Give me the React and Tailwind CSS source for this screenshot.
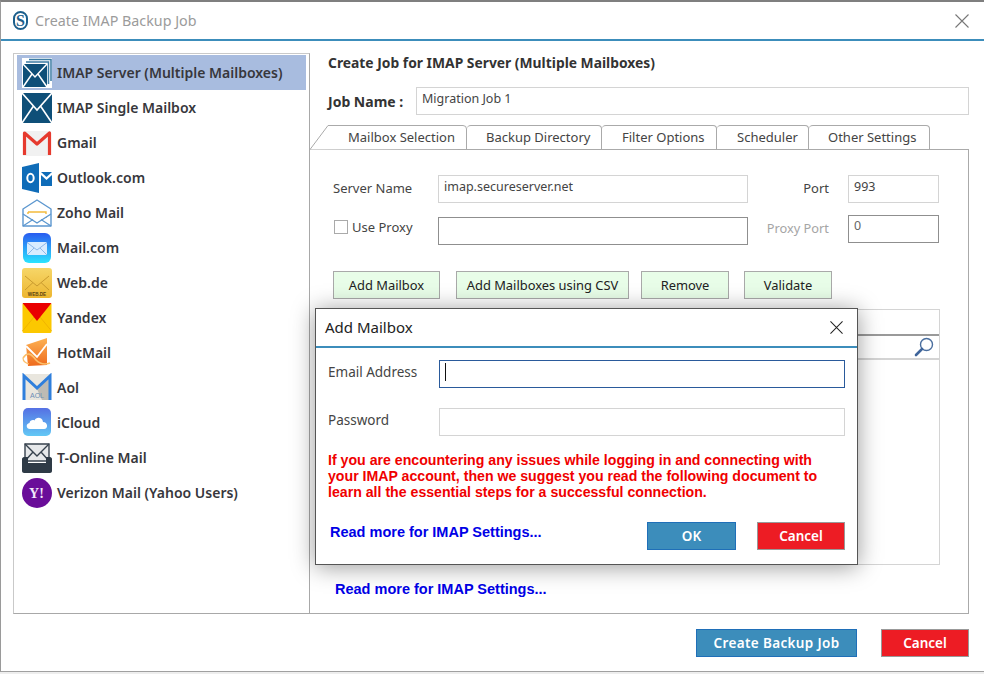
import React from 'react';

const ImapIcon = () => (
  <svg viewBox="0 0 30 30" className="w-[30px] h-[30px]">
    <rect width="30" height="30" fill="#0e4f78" />
    <path d="M0 0 L15 17 L30 0 M0 30 L11.5 13 M30 30 L18.5 13" stroke="#fff" strokeWidth="1.6" fill="none" />
  </svg>
);

const ImapMultiIcon = () => (
  <svg viewBox="0 0 30 30" className="w-[30px] h-[30px]">
    <rect width="30" height="30" fill="#fff" />
    <path d="M7 1.5 H29 V23" stroke="#3b7ba3" strokeWidth="1.5" fill="none" />
    <path d="M4 4 H26.5 V26" stroke="#3b7ba3" strokeWidth="1.5" fill="none" />
    <rect x="1" y="6" width="24" height="23" fill="#0e4f78" />
    <path d="M1 6 L13 19 L25 6 M1 29 L10 16 M25 29 L16 16" stroke="#fff" strokeWidth="1.5" fill="none" />
  </svg>
);

const GmailIcon = () => (
  <svg viewBox="0 0 30 30" className="w-[30px] h-[30px]">
    <rect x="1" y="3" width="28" height="25" fill="#f1f1f1" />
    <path d="M2.5 27 V5 L15 16 L27.5 5 V27" stroke="#e63a2e" strokeWidth="3.2" fill="none" strokeLinejoin="round" />
  </svg>
);

const OutlookIcon = () => (
  <svg viewBox="0 0 30 30" className="w-[30px] h-[30px]">
    <path d="M0 4 L17 0 V30 L0 26 Z" fill="#0f6cb8" />
    <ellipse cx="8.5" cy="15" rx="3.2" ry="4.2" fill="none" stroke="#fff" strokeWidth="2" />
    <path d="M19 9 H30 L24.5 14 Z" fill="#0f6cb8" />
    <path d="M19 12 L24.5 17 L30 12 V23 H19 Z" fill="#0f6cb8" />
  </svg>
);

const ZohoIcon = () => (
  <svg viewBox="0 0 30 30" className="w-[30px] h-[30px]">
    <path d="M1 11 L15 2 L29 11 V28 H1 Z" fill="#fff" stroke="#5c97cf" strokeWidth="1.4" strokeLinejoin="round" />
    <path d="M6 14 H24 V20 M6 14 V20" stroke="#f3bb3c" strokeWidth="1.4" fill="none" />
    <path d="M1 16 L15 25 L29 16" stroke="#5c97cf" strokeWidth="1.4" fill="#fff" />
    <path d="M1 28 L11 21.5 M29 28 L19 21.5" stroke="#5c97cf" strokeWidth="1.2" />
  </svg>
);

const MailComIcon = () => (
  <svg viewBox="0 0 30 30" className="w-[30px] h-[30px]">
    <defs>
      <linearGradient id="mc" x1="0" y1="0" x2="0" y2="1">
        <stop offset="0" stopColor="#2a5cf0" />
        <stop offset="1" stopColor="#2be4ff" />
      </linearGradient>
    </defs>
    <rect x="1" y="0" width="28" height="30" rx="6" fill="url(#mc)" />
    <rect x="5" y="9" width="20" height="13" rx="1.5" fill="#d8ecff" />
    <path d="M5 9.5 L15 17 L25 9.5 M5 22 L12 15 M25 22 L18 15" stroke="#8db8e8" strokeWidth="1" fill="none" />
  </svg>
);

const WebDeIcon = () => (
  <svg viewBox="0 0 30 30" className="w-[30px] h-[30px]">
    <defs>
      <linearGradient id="wd" x1="0" y1="0" x2="0" y2="1">
        <stop offset="0" stopColor="#f6d668" />
        <stop offset="1" stopColor="#edb630" />
      </linearGradient>
    </defs>
    <rect width="30" height="30" rx="3" fill="url(#wd)" />
    <path d="M3 8 L15 18 L27 8 M3 22 L11 14.5 M27 22 L19 14.5" stroke="#c99a2e" strokeWidth="1" fill="none" />
    <text x="15" y="27.5" textAnchor="middle" fontSize="4.6" fontWeight="700" fill="#5a4210" fontFamily="Liberation Sans, sans-serif">WEB.DE</text>
  </svg>
);

const YandexIcon = () => (
  <svg viewBox="0 0 30 30" className="w-[30px] h-[30px]">
    <rect x="0.5" width="29" height="30" rx="1.5" fill="#fcc800" />
    <path d="M0.5 28 L12 14 M29.5 28 L18 14" stroke="#f0b400" strokeWidth="1" />
    <path d="M0.5 0 H29.5 L15 18 Z" fill="#e90000" />
  </svg>
);

const HotmailIcon = () => (
  <svg viewBox="0 0 30 30" className="w-[30px] h-[30px]">
    <defs>
      <linearGradient id="hm" x1="0" y1="0" x2="0" y2="1">
        <stop offset="0" stopColor="#fdb254" />
        <stop offset="1" stopColor="#ee6a1c" />
      </linearGradient>
    </defs>
    <path d="M4 7 L25 0 V27 L6 28 Z" fill="url(#hm)" />
    <path d="M4 8 L15 19 L25 6" stroke="#fff" strokeWidth="1.8" fill="none" />
    <path d="M1 20 C5 14 9 15 14 22 C18 26 23 27 28 25" stroke="#fbbf6a" strokeWidth="1.6" fill="none" />
    <path d="M1 20 C1 24 4 25 7 26" stroke="#fbbf6a" strokeWidth="1.2" fill="none" />
  </svg>
);

const AolIcon = () => (
  <svg viewBox="0 0 30 30" className="w-[30px] h-[30px]">
    <path d="M2 1 H28 V27 H2 Z" fill="#e9e6de" />
    <path d="M15 16 L28 4 V27 H20 Z" fill="#bdbbb4" />
    <path d="M2 27 V3 L15 15 L28 3 V27" stroke="#2f7fdc" strokeWidth="3" fill="none" />
    <text x="15" y="25" textAnchor="middle" fontSize="7" fill="#6b8db5" fontFamily="Liberation Sans, sans-serif">AOL</text>
  </svg>
);

const ICloudIcon = () => (
  <svg viewBox="0 0 30 30" className="w-[30px] h-[30px]">
    <defs>
      <linearGradient id="ic" x1="0" y1="0" x2="0" y2="1">
        <stop offset="0" stopColor="#5570e4" />
        <stop offset="1" stopColor="#62c8f5" />
      </linearGradient>
    </defs>
    <rect x="1" width="28" height="28" rx="5" fill="url(#ic)" />
    <path d="M8 21 C4 21 3.5 15.5 7.5 15 C8 12 11 11.5 12.5 12.5 C14 8.5 20.5 9 21 14 C26 14 26.5 21 22 21 Z" fill="#fff" />
  </svg>
);

const TOnlineIcon = () => (
  <svg viewBox="0 0 30 30" className="w-[30px] h-[30px]">
    <path d="M3 1 H27 V18 H3 Z" fill="#e6e8ea" stroke="#37424e" strokeWidth="1.4" />
    <path d="M3 1 L15 13 L27 1 M3 18 L11 9 M27 18 L19 9" stroke="#37424e" strokeWidth="1.4" fill="none" />
    <path d="M0 16 C0 15 1 14 2 14 H6 V20 H24 V14 H28 C29 14 30 15 30 16 V28 C30 29 29 30 28 30 H2 C1 30 0 29 0 28 Z" fill="#2e3a46" />
  </svg>
);

const YahooIcon = () => (
  <svg viewBox="0 0 30 30" className="w-[30px] h-[30px]">
    <circle cx="15" cy="15" r="15" fill="#6a0d99" />
    <text x="14.5" y="20" textAnchor="middle" fontSize="14" fontWeight="700" fill="#f3e7fa" fontFamily="Liberation Serif, serif">Y!</text>
  </svg>
);

const mailTypes = [
  { name: 'IMAP Server (Multiple Mailboxes)', icon: <ImapMultiIcon />, active: true },
  { name: 'IMAP Single Mailbox', icon: <ImapIcon /> },
  { name: 'Gmail', icon: <GmailIcon /> },
  { name: 'Outlook.com', icon: <OutlookIcon /> },
  { name: 'Zoho Mail', icon: <ZohoIcon /> },
  { name: 'Mail.com', icon: <MailComIcon /> },
  { name: 'Web.de', icon: <WebDeIcon /> },
  { name: 'Yandex', icon: <YandexIcon /> },
  { name: 'HotMail', icon: <HotmailIcon /> },
  { name: 'Aol', icon: <AolIcon /> },
  { name: 'iCloud', icon: <ICloudIcon /> },
  { name: 'T-Online Mail', icon: <TOnlineIcon /> },
  { name: 'Verizon Mail (Yahoo Users)', icon: <YahooIcon /> },
];

const tabs = [
  { name: 'Backup Directory', w: 'w-[135px] pl-[19px]' },
  { name: 'Filter Options', w: 'w-[115px] pl-[20px]' },
  { name: 'Scheduler', w: 'w-[92px] pl-[20px]' },
  { name: 'Other Settings', w: 'w-[121px] pl-[19px]' },
];

const CloseX = ({ className }) => (
  <svg viewBox="0 0 14 14" className={className}>
    <path d="M0.5 0.5 L13.5 13.5 M13.5 0.5 L0.5 13.5" stroke="currentColor" strokeWidth="1.1" />
  </svg>
);

const GreenButton = ({ w, children }) => (
  <button className={`${w} h-[28px] pt-[1px] bg-[#e8fde8] border border-[#a9a9a9] text-[12.9px] text-[#222]`}>{children}</button>
);

const App = () => {
  return (
    <div className="relative w-[984px] h-[674px] overflow-hidden bg-[#eeeeee] font-['Noto_Sans','Liberation_Sans',sans-serif] text-[#333]">
      <div className="h-[672px] bg-white border-t-2 border-l border-b border-t-[#7f7f7f] border-l-[#9a9a9a] border-b-[#a0a0a0] flex flex-col">
        {/* title bar */}
        <div className="h-[37px] shrink-0 flex items-center pl-[12px] pr-[15px]">
          <div className="w-[15px] h-[19px] rounded-full bg-white border-2 border-[#1b5f8c] flex items-center justify-center">
            <span className="font-['Liberation_Serif',serif] font-bold text-[16px] leading-none text-[#1b5f8c]">S</span>
          </div>
          <span className="ml-[7px] text-[14.3px] text-[#9b9b9b]">Create IMAP Backup Job</span>
          <CloseX className="ml-auto w-[14px] h-[14px] text-[#777]" />
        </div>
        <div className="h-[2px] shrink-0 bg-[#3c8dbb]" />

        <div className="flex pl-[12px] pt-[12px]">
          {/* mail type list */}
          <div className="w-[297px] h-[561px] shrink-0 border border-[#c9c9c9] border-r-[#a8a8a8] border-b-[#a8a8a8] pl-[3px] pr-[3px] pt-[1px]">
            {mailTypes.map((m) => (
              <div key={m.name} className={`h-[35px] flex items-center pl-[5px] ${m.active ? 'bg-[#a8bcdf]' : ''}`}>
                {m.icon}
                <span className="ml-[5px] text-[14px] font-semibold text-[#37373c] whitespace-nowrap">{m.name}</span>
              </div>
            ))}
          </div>

          {/* right side */}
          <div className="w-[659px] shrink-0 flex flex-col">
            <div className="pl-[18px] h-[20px] flex items-center text-[13.85px] font-bold text-[#333]">Create Job for IMAP Server (Multiple Mailboxes)</div>
            <div className="pl-[18px] mt-[14px] flex items-center">
              <span className="w-[88px] text-[14px] font-bold text-[#333]">Job Name :</span>
              <div className="w-[553px] h-[28px] border border-[#d4d4d4] pl-[5px] pt-[2px] text-[12.5px] text-[#444]">Migration Job 1</div>
            </div>

            {/* tabs */}
            <div className="mt-[10px] flex h-[25px] relative z-10 -mb-px">
              <div className="relative w-[157px] h-[25px] pl-[38px] pt-[3px] text-[13px] text-[#444]">
                <svg viewBox="0 0 157 25" className="absolute inset-0 w-[157px] h-[25px]">
                  <path d="M0 24.5 L18 0.5 H153 Q156.5 0.5 156.5 4 V24" fill="#fff" stroke="#aaaaaa" />
                </svg>
                <span className="relative">Mailbox Selection</span>
              </div>
              {tabs.map((t) => (
                <div key={t.name} className={`${t.w} h-[25px] border-t border-r border-b border-[#aaaaaa] rounded-t-[4px] pt-[2px] text-[13px] text-[#444] whitespace-nowrap`}>
                  {t.name}
                </div>
              ))}
            </div>

            {/* tab panel */}
            <div className="h-[465px] border-t border-r border-b border-[#aaaaaa] pl-[23px] pt-[25px]">
              <div className="flex items-center h-[28px]">
                <span className="w-[105px] text-[13px] text-[#444]">Server Name</span>
                <div className="w-[310px] h-[28px] border border-[#d4d4d4] pl-[5px] pt-[2px] text-[12.5px] text-[#444]">imap.secureserver.net</div>
                <span className="w-[81px] text-right text-[13px] text-[#444]">Port</span>
                <div className="ml-[19px] w-[91px] h-[28px] border border-[#d4d4d4] pl-[5px] pt-[2px] text-[12.5px] text-[#444]">993</div>
              </div>
              <div className="flex items-start mt-[12px]">
                <div className="w-[105px] flex items-center h-[24px] pl-[1px]">
                  <span className="w-[14px] h-[14px] border border-[#aaaaaa]" />
                  <span className="ml-[4px] pt-[1px] text-[13px] text-[#444]">Use Proxy</span>
                </div>
                <div className="mt-[2px] w-[310px] h-[28px] border border-[#8f8f8f]" />
                <span className="w-[81px] mt-[4px] text-right text-[12.8px] text-[#a5a5a5]">Proxy Port</span>
                <div className="ml-[19px] w-[91px] h-[28px] border border-[#8f8f8f] pl-[5px] pt-[1px] text-[12.5px] text-[#666]">0</div>
              </div>
              <div className="flex mt-[26px]">
                <GreenButton w="w-[107px]">Add Mailbox</GreenButton>
                <div className="ml-[16px]"><GreenButton w="w-[173px]">Add Mailboxes using CSV</GreenButton></div>
                <div className="ml-[12px]"><GreenButton w="w-[88px]">Remove</GreenButton></div>
                <div className="ml-[15px]"><GreenButton w="w-[88px]">Validate</GreenButton></div>
              </div>

              {/* mailbox table, mostly hidden behind the dialog */}
              <div className="mt-[10px] w-[607px] h-[256px] border border-[#d4d4d4]">
                <div className="h-[26px] border-b-2 border-[#9a9a9a]" />
                <div className="h-[24px] border-b-2 border-[#d4d4d4] flex items-center justify-end pr-[5px]">
                  <svg viewBox="0 0 20 20" className="w-[20px] h-[20px]">
                    <circle cx="12.5" cy="7.5" r="6" fill="none" stroke="#4a6e9e" strokeWidth="1.4" />
                    <path d="M8 12 L2 18" stroke="#3f659b" strokeWidth="2.6" strokeLinecap="round" />
                  </svg>
                </div>
              </div>
              <div className="mt-[15px] ml-[2px] font-['Liberation_Sans',sans-serif] font-bold text-[14.5px] leading-[18px] text-[#0000e6]">Read more for IMAP Settings...</div>
            </div>

            {/* footer */}
            <div className="mt-[15px] flex justify-end gap-[24px]">
              <button className="w-[161px] h-[28px] bg-[#3c8dbb] border border-[#1f6fb8] text-white text-[13.5px] tracking-[0.35px] font-semibold">Create Backup Job</button>
              <button className="w-[88px] h-[28px] bg-[#ed1c24] border border-[#999] text-white text-[13.5px] font-semibold">Cancel</button>
            </div>
          </div>
        </div>
      </div>

      {/* add mailbox dialog */}
      <div className="absolute left-[315px] top-[308px] w-[543px] h-[257px] bg-white border border-[#555] shadow-[0_2px_22px_rgba(0,0,0,0.4)]">
        <div className="h-[37px] flex items-center pl-[9px] pr-[14px]">
          <span className="text-[15px] text-[#222]">Add Mailbox</span>
          <CloseX className="ml-auto w-[13px] h-[13px] text-[#222]" />
        </div>
        <div className="h-[2px] bg-[#3c8dbb]" />
        <div className="pl-[12px] pr-[12px]">
          <div className="flex mt-[12px]">
            <span className="w-[111px] pt-[2px] text-[13.5px] text-[#444]">Email Address</span>
            <div className="flex-1 h-[28px] border border-[#2a5a9b] pl-[5px] pt-[2px]">
              <div className="w-px h-[18px] bg-[#111]" />
            </div>
          </div>
          <div className="flex mt-[20px]">
            <span className="w-[111px] pt-[2px] text-[13.5px] text-[#444]">Password</span>
            <div className="flex-1 h-[28px] border border-[#d4d4d4]" />
          </div>
          <p className="mt-[16px] font-['Liberation_Sans',sans-serif] font-bold text-[14.15px] leading-[16px] text-[#f00000] whitespace-nowrap">
            If you are encountering any issues while logging in and connecting with
            <br />
            your IMAP account, then we suggest you read the following document to
            <br />
            learn all the essential steps for a successful connection.
          </p>
          <div className="flex items-start mt-[22px]">
            <span className="ml-[2px] mt-[1px] font-['Liberation_Sans',sans-serif] font-bold text-[14.5px] leading-[18px] text-[#0000e6]">Read more for IMAP Settings...</span>
            <button className="ml-auto w-[89px] h-[28px] bg-[#3c8dbb] border border-[#1f6fb8] text-white text-[13.5px] font-semibold">OK</button>
            <button className="ml-[21px] w-[88px] h-[28px] bg-[#ed1c24] border border-[#999] text-white text-[13.5px] font-semibold">Cancel</button>
          </div>
        </div>
      </div>
    </div>
  );
};

export default App;
